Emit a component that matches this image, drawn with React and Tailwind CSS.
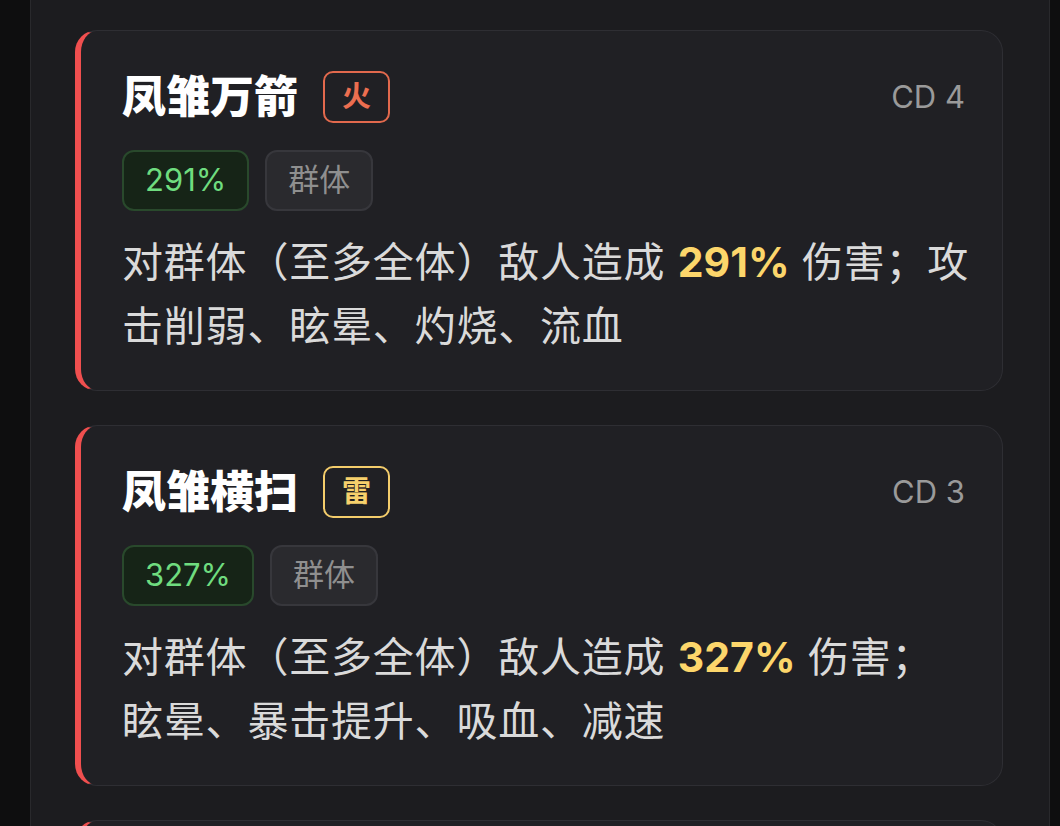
import React from "react";

const skills = [
  {
    name: "凤雏万箭",
    element: "火",
    elementClass: "border-[#e2694d] text-[#ec6e50]",
    cd: 4,
    pct: "291%",
    target: "群体",
    pre: "对群体（至多全体）敌人造成",
    post: "伤害；攻击削弱、眩晕、灼烧、流血",
  },
  {
    name: "凤雏横扫",
    element: "雷",
    elementClass: "border-[#f3cc6b] text-[#f6d06c]",
    cd: 3,
    pct: "327%",
    target: "群体",
    pre: "对群体（至多全体）敌人造成",
    post: "伤害；眩晕、暴击提升、吸血、减速",
  },
  {
    name: "凤雏连击",
    element: "火",
    elementClass: "border-[#e2694d] text-[#ec6e50]",
    cd: 2,
    pct: "188%",
    target: "单体",
    pre: "对单体敌人造成",
    post: "伤害；灼烧、流血",
  },
];

const SkillCard = ({ skill }) => (
  <div className="rounded-[22px] border border-[#2e2e33] border-l-[6px] border-l-[#f04f4f] bg-[#202024] pl-[41px] pr-[30px] pt-[40px] pb-[32px]">
    {/* header row */}
    <div className="flex h-[52px] items-center justify-between">
      <div className="flex items-center gap-[25px]">
        <h3 className="text-[44px] font-black leading-[52px] text-white">
          {skill.name}
        </h3>
        <span
          className={`flex h-[52px] w-[67px] items-center justify-center rounded-[10px] border-2 text-[29px] font-bold ${skill.elementClass}`}
        >
          {skill.element}
        </span>
      </div>
      <span className="mr-[7px] text-[31px] text-[#9a9a9a]">CD {skill.cd}</span>
    </div>

    {/* tags */}
    <div className="mt-[27px] flex gap-[16px]">
      <span className="flex h-[61px] items-center rounded-[12px] border-2 border-[#29492c] bg-[#162417] px-[21px] text-[31px] text-[#6fdc7f]">
        {skill.pct}
      </span>
      <span className="flex h-[61px] items-center rounded-[12px] border-2 border-[#37373c] bg-[#2a2a2e] px-[21px] text-[31px] text-[#8f8f8f]">
        {skill.target}
      </span>
    </div>

    {/* description */}
    <p className="mt-[19px] text-[41px] leading-[64px] tracking-[0.8px] text-[#dadada]">
      {skill.pre} <span className="font-bold tracking-normal text-[#fcd66b]">{skill.pct}</span>{" "}
      {skill.post}
    </p>
  </div>
);

export default function App() {
  return (
    <div className="min-h-screen bg-[#0e0e0f] pl-[30px] pr-[10px] font-['Inter','Noto_Sans_CJK_SC',sans-serif]">
      <div className="min-h-screen border-x border-[#29292c] bg-[#1c1c1f] pl-[44px] pr-[46px] pt-[30px] pb-[40px]">
        <div className="flex flex-col gap-[34px]">
          {skills.map((skill) => (
            <SkillCard key={skill.name} skill={skill} />
          ))}
        </div>
      </div>
    </div>
  );
}
